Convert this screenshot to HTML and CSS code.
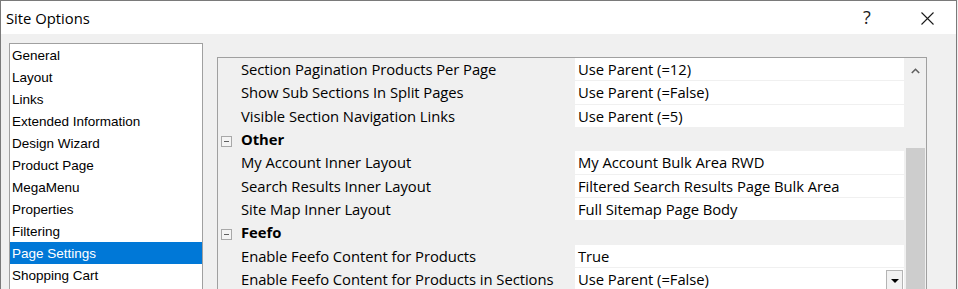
FILE: index.html
```html
<!DOCTYPE html>
<html lang="en">
<head>
    <meta charset="UTF-8">
    <title>Site Options</title>
    <link rel="stylesheet" href="styles.css">
</head>
<body>
<div class="window">
    <header class="titlebar">
        <div class="title">Site Options</div>
        <div class="title-btn help">?</div>
        <div class="title-btn close">
            <svg width="13" height="13" viewBox="0 0 13 13"><path d="M0.5 0.5 L12.5 12.5 M12.5 0.5 L0.5 12.5" stroke="#1a1a1a" stroke-width="1.1" fill="none"/></svg>
        </div>
    </header>

    <div class="client">
        <ul class="listbox">
            <li>General</li>
            <li>Layout</li>
            <li>Links</li>
            <li>Extended Information</li>
            <li>Design Wizard</li>
            <li>Product Page</li>
            <li>MegaMenu</li>
            <li>Properties</li>
            <li>Filtering</li>
            <li class="selected">Page Settings</li>
            <li>Shopping Cart</li>
        </ul>

        <div class="propgrid">
            <div class="rows">
                <div class="row"><span class="label">Section Pagination Products Per Page</span><span class="value">Use Parent (=12)</span></div>
                <div class="row"><span class="label">Show Sub Sections In Split Pages</span><span class="value">Use Parent (=False)</span></div>
                <div class="row"><span class="label">Visible Section Navigation Links</span><span class="value">Use Parent (=5)</span></div>
                <div class="row category"><span class="toggle"></span><span class="label">Other</span></div>
                <div class="row"><span class="label">My Account Inner Layout</span><span class="value">My Account Bulk Area RWD</span></div>
                <div class="row"><span class="label">Search Results Inner Layout</span><span class="value">Filtered Search Results Page Bulk Area</span></div>
                <div class="row"><span class="label">Site Map Inner Layout</span><span class="value">Full Sitemap Page Body</span></div>
                <div class="row category"><span class="toggle"></span><span class="label">Feefo</span></div>
                <div class="row"><span class="label">Enable Feefo Content for Products</span><span class="value">True</span></div>
                <div class="row"><span class="label">Enable Feefo Content for Products in Sections</span><span class="value">Use Parent (=False)<span class="dropdown"></span></span></div>
            </div>
            <div class="scrollbar">
                <div class="arrow-up">
                    <svg width="9" height="6" viewBox="0 0 9 6"><path d="M0.8 5 L4.5 1.3 L8.2 5" stroke="#606060" stroke-width="1.6" fill="none"/></svg>
                </div>
                <div class="thumb"></div>
            </div>
        </div>
    </div>
</div>
</body>
</html>
```

FILE: styles.css
```css
:root {
    --dialog-bg: #f0f0f0;
    --border: #a0a0a0;
    --text: #000000;
    --select: #0078d7;
}

body {
    margin: 0;
    font-family: "Open Sans", "Noto Sans", sans-serif;
    color: var(--text);
    background: var(--dialog-bg);
}

.window {
    height: 289px;
    width: 957px;
    box-sizing: border-box;
    border: 1px solid #7a7a7a;
    border-bottom: none;
    display: flex;
    flex-direction: column;
    overflow: hidden;
}

/* title bar */
.titlebar {
    height: 33px;
    background: #ffffff;
    display: flex;
    align-items: center;
    flex-shrink: 0;
}
.title { font-size: 14.8px; padding-left: 5px; flex: 1; padding-top: 1px; }
.title-btn { display: flex; align-items: center; justify-content: center; }
.help { font-size: 18px; width: 16px; margin-right: 42px; color: #1a1a1a; padding-bottom: 1px; }
.close { width: 20px; margin-right: 19px; padding-top: 2px; }

/* body */
.client {
    flex: 1;
    display: flex;
    align-items: flex-start;
    padding-left: 8px;
}

.listbox {
    list-style: none;
    margin: 9px 0 0 0;
    padding: 0;
    width: 194px;
    height: 260px;
    box-sizing: border-box;
    background: #ffffff;
    border: 1px solid var(--border);
    font-family: "Liberation Sans", Arial, sans-serif;
    font-size: 13.5px;
}
.listbox li {
    height: 22px;
    line-height: 24px;
    overflow: hidden;
    padding-left: 2px;
    white-space: nowrap;
}
.listbox li.selected { background: var(--select); color: #ffffff; }

.propgrid {
    margin: 23px 0 0 14px;
    width: 710px;
    height: 240px;
    box-sizing: border-box;
    border: 1px solid var(--border);
    border-bottom: none;
    display: flex;
    background: var(--dialog-bg);
}
.rows { width: 686px; }
.row {
    height: 23.33px;
    display: flex;
    align-items: stretch;
    font-size: 14.8px;
    letter-spacing: -0.05px;
    white-space: nowrap;
}
.row .label {
    width: 357px;
    padding-left: 23px;
    box-sizing: border-box;
    line-height: 23px;
}
.row .value {
    flex: 1;
    background: #ffffff;
    border-bottom: 1px solid var(--dialog-bg);
    padding-left: 3px;
    line-height: 22px;
    position: relative;
}
.row.category .label { font-weight: 700; padding-left: 9px; width: auto; }
.toggle {
    width: 9px;
    height: 9px;
    margin: 8px 0 0 3px;
    border: 1px solid #a8a8a8;
    background: #f4f4f4;
    position: relative;
}
.toggle::after {
    content: "";
    position: absolute;
    left: 2px; right: 2px; top: 4px;
    height: 1px;
    background: #606060;
}

.dropdown {
    position: absolute;
    right: 1px; top: 2px;
    width: 17px; height: 21px;
    box-sizing: border-box;
    border: 1px solid #b4b4b4;
    background: #f2f2f2;
}
.dropdown::after {
    content: "";
    position: absolute;
    left: 4px; top: 8px;
    border-left: 4px solid transparent;
    border-right: 4px solid transparent;
    border-top: 4px solid #000000;
}

.scrollbar {
    width: 22px;
    display: flex;
    flex-direction: column;
    align-items: center;
}
.arrow-up { height: 26px; display: flex; align-items: center; }
.thumb {
    margin-top: 64px;
    width: 19px;
    flex: 1;
    background: #cdcdcd;
}
```
